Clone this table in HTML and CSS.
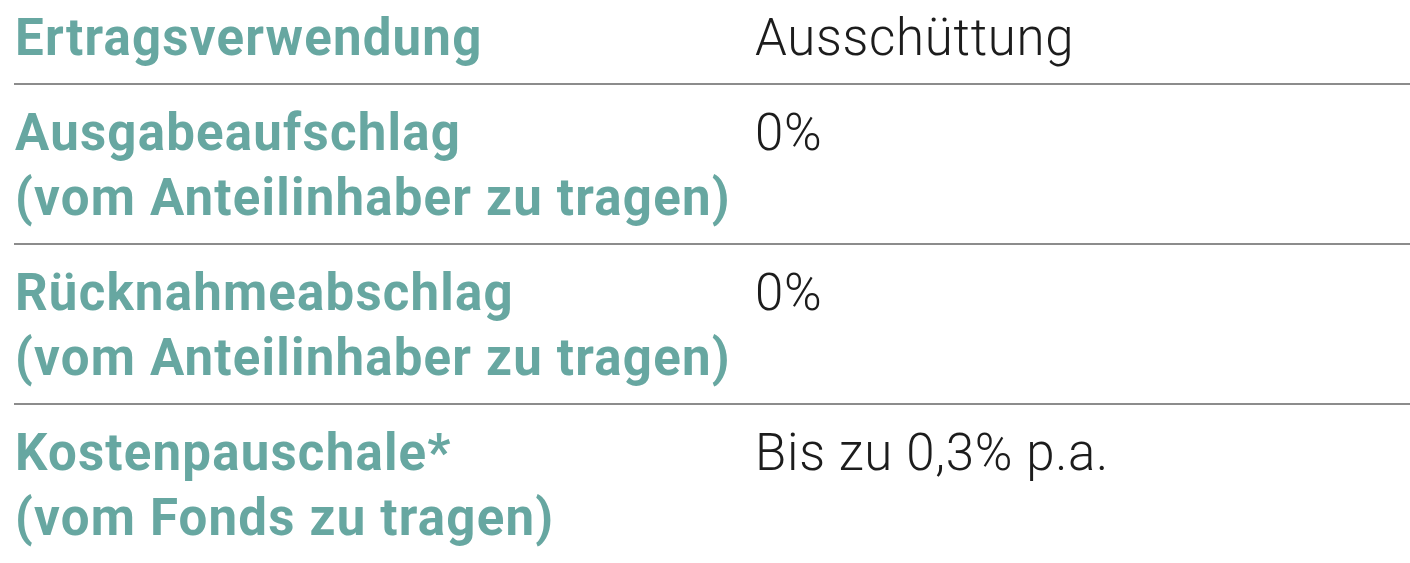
FILE: index.html
```html
<!DOCTYPE html>
<html lang="de">
<head>
<meta charset="utf-8">
<title>Fondsdetails</title>
<link rel="stylesheet" href="styles.css">
</head>
<body>
<div class="table">
  <div class="row first">
    <div class="label">Ertragsverwendung</div>
    <div class="value">Ausschüttung</div>
  </div>
  <div class="row">
    <div class="label">Ausgabeaufschlag<br>(vom Anteilinhaber zu tragen)</div>
    <div class="value">0%</div>
  </div>
  <div class="row">
    <div class="label">Rücknahmeabschlag<br>(vom Anteilinhaber zu tragen)</div>
    <div class="value">0%</div>
  </div>
  <div class="row">
    <div class="label">Kostenpauschale*<br>(vom Fonds zu tragen)</div>
    <div class="value">Bis zu 0,3% p.a.</div>
  </div>
</div>
</body>
</html>
```
FILE: styles.css
```css
html, body {
  margin: 0;
  padding: 0;
  background: #ffffff;
}
body {
  padding-left: 14px;
  overflow: hidden;
}
.table {
  width: 1396px;
  display: flex;
  flex-direction: column;
}
.row {
  display: grid;
  grid-template-columns: 741px 1fr;
  padding: 15px 0 13px;
  border-top: 2px solid #8c8c8c;
  font-size: 51px;
  line-height: 65px;
}
.row.first {
  border-top: none;
  padding-top: 5px;
}
.label {
  font-family: Roboto, "Liberation Sans", sans-serif;
  font-weight: 700;
  color: #67a7a1;
  padding-left: 1px;
  letter-spacing: 1.2px;
}
.value {
  font-family: Roboto, "Liberation Sans", sans-serif;
  font-weight: 300;
  color: #1c1c1c;
  letter-spacing: 0.7px;
}
```
